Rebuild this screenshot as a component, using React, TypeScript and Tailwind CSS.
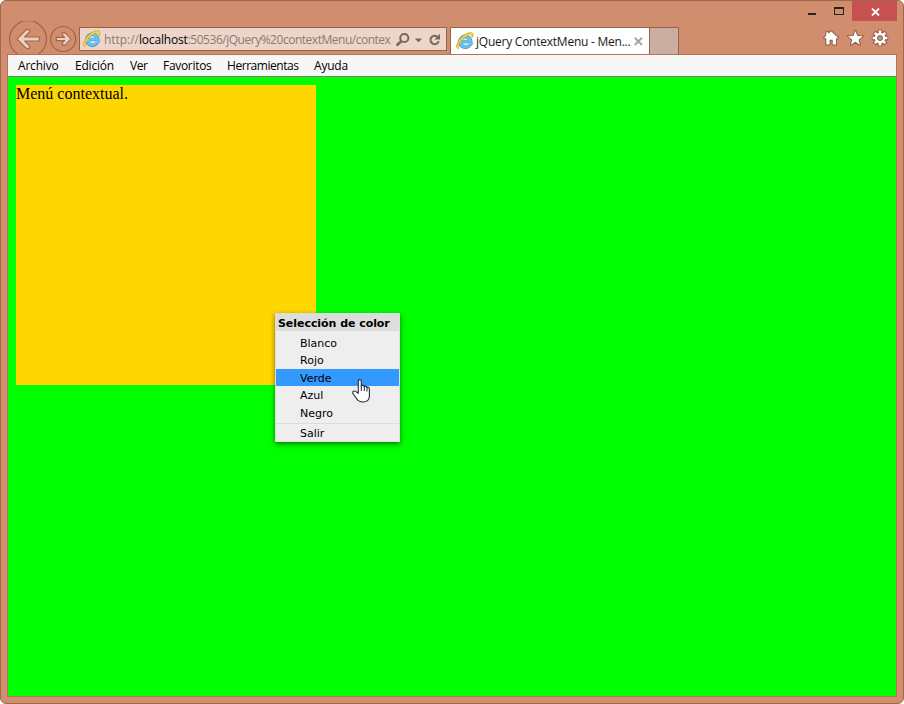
import React from "react";

function IELogo() {
  return (
    <svg width="18" height="18" viewBox="0 0 18 18" className="shrink-0">
      <circle cx="9.3" cy="9.8" r="7.2" fill="#3b97d3" />
      <circle cx="9.3" cy="9.6" r="6.4" fill="#6cc4ee" />
      <path d="M6.2 8.3Q6.7 5.9 9.2 5.9T12.2 8.3Z" fill="#f5f0ee" stroke="#3b97d3" strokeWidth=".6" />
      <path d="M6.2 11H17V12.2H12.6Q11.6 13.7 9.5 13.6Q6.8 13.4 6.2 11Z" fill="#f5f0ee" stroke="#3b97d3" strokeWidth=".6" />
      <g fill="none">
        <path d="M2.9 16 C0.4 16 1 12 4.6 7.4 C8.4 2.8 14.2 0.4 15.8 1.9 C16.5 2.6 16.3 3.8 15.5 5.1" stroke="#dca018" strokeWidth="2.3" />
        <path d="M2.9 15.8 C0.9 15.8 1.3 12 4.9 7.6 C8.6 3.1 14.2 0.9 15.6 2.1 C16.2 2.7 16.1 3.8 15.4 4.9" stroke="#ffd836" strokeWidth="1.4" />
      </g>
    </svg>
  );
}

const menus = [
  { label: "Archivo", cls: "w-[41px] tracking-[-0.2px]" },
  { label: "Edición", cls: "w-[39px] tracking-[-0.2px]" },
  { label: "Ver", cls: "w-[17px] tracking-[-0.4px]" },
  { label: "Favoritos", cls: "w-[48px] tracking-[-0.3px]" },
  { label: "Herramientas", cls: "w-[71px] tracking-[-0.45px]" },
  { label: "Ayuda", cls: "w-[34px] tracking-[-0.2px]" },
];

function WindowControls() {
  return (
    <div className="-mr-px flex h-5 justify-end">
      <svg width="44" height="19" viewBox="0 0 44 19">
        <rect x="0" y="12" width="8" height="2" fill="#2b211d" />
        <path d="M26 6h10v8h-10z M27 8v5h8v-5z" fill="#2b211d" fillRule="evenodd" />
      </svg>
      <div className="flex h-5 w-[45px] items-center justify-center bg-[#c75050]">
        <svg width="9" height="8" viewBox="0 0 9 8" className="ml-px mt-px">
          <path d="M1 .5 8 7.5M8 .5 1 7.5" stroke="#fff" strokeWidth="1.8" />
        </svg>
      </div>
    </div>
  );
}

function NavButtons() {
  return (
    <svg width="71" height="33" viewBox="0 0 71 33" className="shrink-0">
      <g fill="none" stroke="#a0644a" strokeWidth="1.2">
        <circle cx="20" cy="18" r="18.4" />
        <circle cx="55.2" cy="18" r="12.5" />
      </g>
      <g fill="#efcfc0" stroke="#a0644a" strokeWidth="1.1" strokeLinejoin="round">
        <path d="M9 18 18.3 8.6H21L22 10.6 16.7 16H31.2V20H16.7L22 25.4 21 27.4H18.3Z" />
        <path d="M62.8 18 57.2 11.9H55L53.9 13.7 56.6 16.4H48.3V19.6H56.6L53.9 22.3 55 24.1H57.2Z" />
      </g>
    </svg>
  );
}

function AddressBar() {
  return (
    <div className="mt-[6px] flex h-6 w-[368px] items-center border border-[#99634b] bg-[#eed5ca] pl-[3px]">
      <IELogo />
      <div className="ml-[3px] mt-px w-[289px] whitespace-nowrap font-['Open_Sans',sans-serif] text-[12px] leading-[16px] tracking-[-0.48px] text-[#8a7a73]">
        <span className="tracking-[-0.04px]">http://</span>
        <span className="tracking-[-0.17px] text-black">localhost</span>
        :50536/jQuery%20contextMenu/contex
      </div>
      <svg width="48" height="18" viewBox="0 0 48 18" className="ml-[3px] mt-px shrink-0">
        <circle cx="8.3" cy="7" r="4.1" fill="none" stroke="#756860" strokeWidth="2" />
        <path d="M5.4 10 .6 14.6" stroke="#756860" strokeWidth="2.6" />
        <path d="M18.8 7.5h7.4l-3.7 3.8z" fill="#756860" />
        <path d="M42.2 6.6A4.2 4.2 0 1 0 42.7 10.2" fill="none" stroke="#756860" strokeWidth="2" />
        <path d="M44 2.8v5.6h-5.6z" fill="#756860" />
      </svg>
    </div>
  );
}

function Tabs() {
  return (
    <div className="ml-[3px] mt-[6px] flex h-[27px]">
      <div className="flex w-[200px] items-center border border-b-0 border-[#99634b] bg-white pl-[5px]">
        <IELogo />
        <span className="ml-[2px] mt-[2px] w-[158px] whitespace-nowrap font-['Open_Sans',sans-serif] text-[12px] leading-[16px] tracking-[-0.24px] text-[#1a1a1a]">
          jQuery ContextMenu - Men...
        </span>
        <svg width="9" height="9" viewBox="0 0 9 9" className="shrink-0">
          <path d="M.8.8 8 8M8 .8.8 8" stroke="#a6a6a6" strokeWidth="2" />
        </svg>
      </div>
      <div className="w-[29px] border border-b-0 border-l-0 border-[#99634b] bg-[#cbada2]" />
    </div>
  );
}

function ToolIcons() {
  return (
    <svg width="66" height="18" viewBox="0 0 66 18" className="ml-auto mr-[7px] mt-[8px]">
      <g fill="#fff" stroke="#8d5d48" strokeWidth="2" strokeLinejoin="round" className="[paint-order:stroke]">
        <path d="M8 2.2 5.2 4.9V3.2H3.2V6.8L1.2 8.8 2.2 9.8 3.3 9V15.6H6.5V10.8H9.7V15.6H13V9L14 9.8 15 8.8Z" />
        <path d="M32.4 1.8 34.3 7.1 39.9 7.3 35.5 10.7 37 15.8 32.4 12.8 27.8 15.8 29.3 10.7 24.9 7.3 30.5 7.1Z" />
      </g>
      <g transform="translate(57 9)">
        <g stroke="#8d5d48" strokeWidth="4.6">
          <path d="M0-8.2V8.2M-8.2 0H8.2M-5.8-5.8 5.8 5.8M5.8-5.8-5.8 5.8" />
        </g>
        <circle r="6.2" fill="#8d5d48" />
        <g stroke="#fff" strokeWidth="2.6">
          <path d="M0-7.4V7.4M-7.4 0H7.4M-5.2-5.2 5.2 5.2M5.2-5.2-5.2 5.2" />
        </g>
        <circle r="5.2" fill="#fff" />
        <circle r="2.5" fill="#d08e6e" stroke="#8d5d48" />
      </g>
    </svg>
  );
}

function ContextMenu() {
  return (
    <div className="absolute left-[267px] top-[236px] h-[129px] w-[125px] border border-[#ddd] bg-[#eee] font-['DejaVu_Sans',sans-serif] text-[11px] text-black shadow-[0_2px_5px_rgba(0,0,0,0.5)]">
      <div className="h-[17px] whitespace-nowrap bg-[#ddd] pl-[2px] font-bold leading-[20px] tracking-[-0.05px]">
        Selección de color
      </div>
      <div className="pt-[3px]">
        <div className="h-[17px] pl-6 leading-[20px]">Blanco</div>
        <div className="h-[18px] pl-6 leading-[20px]">Rojo</div>
        <div className="h-[17px] bg-[#3399ff] pl-6 leading-[19px]">Verde</div>
        <div className="h-[18px] pl-6 leading-[20px]">Azul</div>
        <div className="h-[19px] pl-6 leading-[20px]">Negro</div>
        <div className="border-t border-[#ddd] pl-6 leading-[19px]">Salir</div>
      </div>
      <svg width="20" height="26" viewBox="0 0 20 26" className="absolute left-[76px] top-[64px]">
        <path
          d="M6.3 15.5V3.3Q6.3 1.6 7.8 1.6T9.3 3.3V8.5Q9.5 7 10.9 7.4Q12.3 7.7 12.3 9Q12.6 7.8 13.8 8.2Q15 8.5 15 10Q15.4 8.8 16.4 9.3Q17.4 9.7 17.4 11.5V18.5Q16.8 24 11.2 24Q6.5 24 4.5 20.5L.9 15.6Q.3 13.3 2 13Q3.6 12.7 5 14.4L6.3 15.5"
          fill="#fff"
          stroke="#25253a"
          strokeWidth="1.1"
        />
        <path d="M9.3 8v5M12.3 9v4M15 10v3.5" stroke="#25253a" />
      </svg>
    </div>
  );
}

export default function App() {
  return (
    <div className="h-[704px] w-[904px] overflow-hidden bg-white">
      <div className="flex h-full w-full flex-col rounded-[6px] border border-[#a0674f] bg-[#d08e6e] px-[6px]">
        <header className="h-[53px] shrink-0 px-px">
          <WindowControls />
          <div className="flex h-[33px] items-start">
            <NavButtons />
            <AddressBar />
            <Tabs />
            <ToolIcons />
          </div>
        </header>
        <div className="flex h-[643px] shrink-0 flex-col border border-[#b87357]">
          <nav className="flex h-[22px] shrink-0 gap-4 border-b border-[#7b7b7b] bg-[#f7f7f7] pl-[10px] font-['Open_Sans',sans-serif] text-[12px] leading-[22px] text-black">
            {menus.map((m) => (
              <span key={m.label} className={"whitespace-nowrap " + m.cls}>
                {m.label}
              </span>
            ))}
          </nav>
          <main className="relative min-h-0 flex-1 bg-[#00ff00] p-2">
            <div className="h-[300px] w-[300px] bg-[#ffd700] font-['Liberation_Serif',serif] text-[16px] leading-[18px] text-black">
              Menú contextual.
            </div>
            <ContextMenu />
          </main>
        </div>
      </div>
    </div>
  );
}
